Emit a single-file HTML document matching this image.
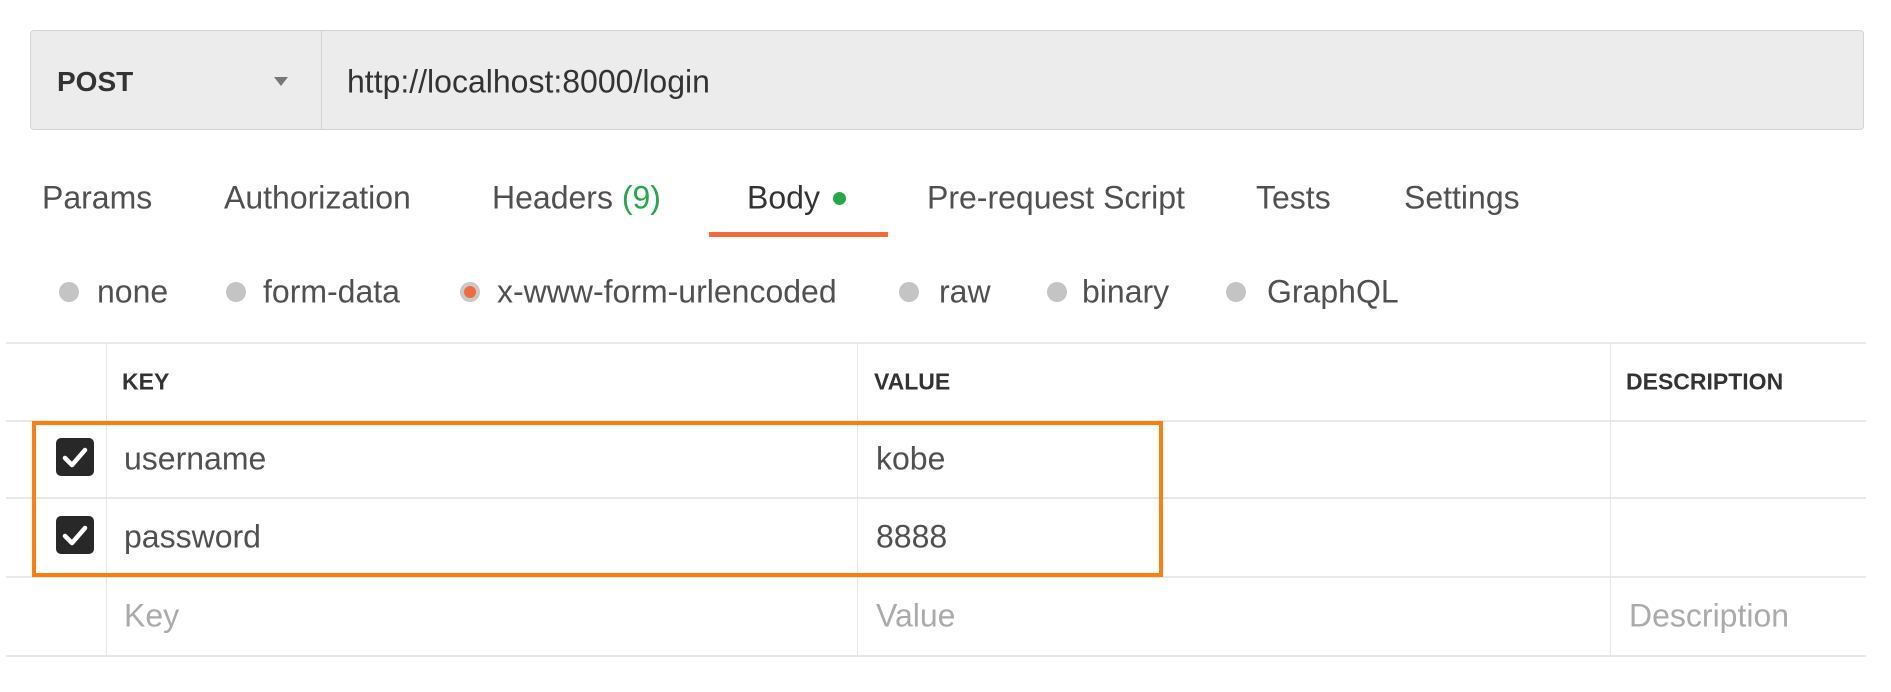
<!DOCTYPE html>
<html><head><meta charset="utf-8"><style>
*{margin:0;padding:0;box-sizing:border-box}
body{width:1891px;height:692px;background:#fff;position:relative;overflow:hidden;font-family:"Liberation Sans",sans-serif;color:#505050}
.a{position:absolute;white-space:nowrap}
.t{font-size:32px;transform:translateY(-50%)}
.rad{position:absolute;width:20px;height:20px;border-radius:50%;background:#c4c4c4;transform:translate(-50%,-50%)}
.hl{position:absolute;left:6px;width:1860px;height:2px;background:#e8e8e8}
.vl{position:absolute;width:1px;background:#e6e6e6;top:343px;height:313px}
.hd{font-size:23px;font-weight:bold;color:#333;transform:translateY(-50%)}
.cb{position:absolute;left:56px;width:38px;height:38px;background:#282828;border-radius:5px}
</style></head><body>
<div class="a" style="left:30px;top:30px;width:1834px;height:100px;background:#ececec;border:1px solid #d4d4d4;border-radius:4px"></div>
<div class="a" style="left:321px;top:31px;width:1px;height:98px;background:#d4d4d4"></div>
<div class="a t" style="left:57px;top:82px;font-weight:bold;color:#333;font-size:28px">POST</div>
<div class="a" style="left:274px;top:77px;width:0;height:0;border-left:7px solid transparent;border-right:7px solid transparent;border-top:9px solid #777"></div>
<div class="a t" style="left:347px;top:82px;color:#333">http://localhost:8000/login</div>

<div class="a t" style="left:42px;top:198px">Params</div>
<div class="a t" style="left:224px;top:198px">Authorization</div>
<div class="a t" style="left:492px;top:198px">Headers <span style="color:#26a74a">(9)</span></div>
<div class="a t" style="left:747px;top:198px;color:#333">Body</div>
<div class="a" style="left:833px;top:192px;width:13px;height:13px;border-radius:50%;background:#26a74a"></div>
<div class="a" style="left:709px;top:232px;width:179px;height:5px;background:#f26b3a"></div>
<div class="a t" style="left:927px;top:198px">Pre-request Script</div>
<div class="a t" style="left:1256px;top:198px">Tests</div>
<div class="a t" style="left:1404px;top:198px">Settings</div>

<div class="rad" style="left:69px;top:292px"></div><div class="a t" style="left:97px;top:292px">none</div>
<div class="rad" style="left:236px;top:292px"></div><div class="a t" style="left:263px;top:292px">form-data</div>
<div class="rad" style="left:470px;top:292px;background:#f26b3a;border:4px solid #c8c8c8"></div><div class="a t" style="left:497px;top:292px">x-www-form-urlencoded</div>
<div class="rad" style="left:909px;top:292px"></div><div class="a t" style="left:939px;top:292px">raw</div>
<div class="rad" style="left:1057px;top:292px"></div><div class="a t" style="left:1082px;top:292px">binary</div>
<div class="rad" style="left:1236px;top:292px"></div><div class="a t" style="left:1267px;top:292px">GraphQL</div>

<div class="hl" style="top:342px"></div>
<div class="hl" style="top:420px"></div>
<div class="hl" style="top:497px"></div>
<div class="hl" style="top:576px"></div>
<div class="hl" style="top:655px"></div>
<div class="vl" style="left:106px"></div>
<div class="vl" style="left:857px"></div>
<div class="vl" style="left:1610px"></div>

<div class="a hd" style="left:122px;top:382px">KEY</div>
<div class="a hd" style="left:874px;top:382px">VALUE</div>
<div class="a hd" style="left:1626px;top:382px">DESCRIPTION</div>

<div class="cb" style="top:438px"><svg width="38" height="38" viewBox="0 0 38 38"><path d="M9 20 L16 27 L29 12" stroke="#fff" stroke-width="4.5" fill="none" stroke-linecap="round" stroke-linejoin="round"/></svg></div>
<div class="cb" style="top:516px"><svg width="38" height="38" viewBox="0 0 38 38"><path d="M9 20 L16 27 L29 12" stroke="#fff" stroke-width="4.5" fill="none" stroke-linecap="round" stroke-linejoin="round"/></svg></div>
<div class="a t" style="left:124px;top:459px">username</div>
<div class="a t" style="left:876px;top:459px">kobe</div>
<div class="a t" style="left:124px;top:537px">password</div>
<div class="a t" style="left:876px;top:537px">8888</div>
<div class="a t" style="left:124px;top:616px;color:#aaa">Key</div>
<div class="a t" style="left:876px;top:616px;color:#aaa">Value</div>
<div class="a t" style="left:1629px;top:616px;color:#aaa">Description</div>

<div class="a" style="left:32px;top:421px;width:1131px;height:156px;border:4px solid #ff7f0e"></div>
</body></html>
